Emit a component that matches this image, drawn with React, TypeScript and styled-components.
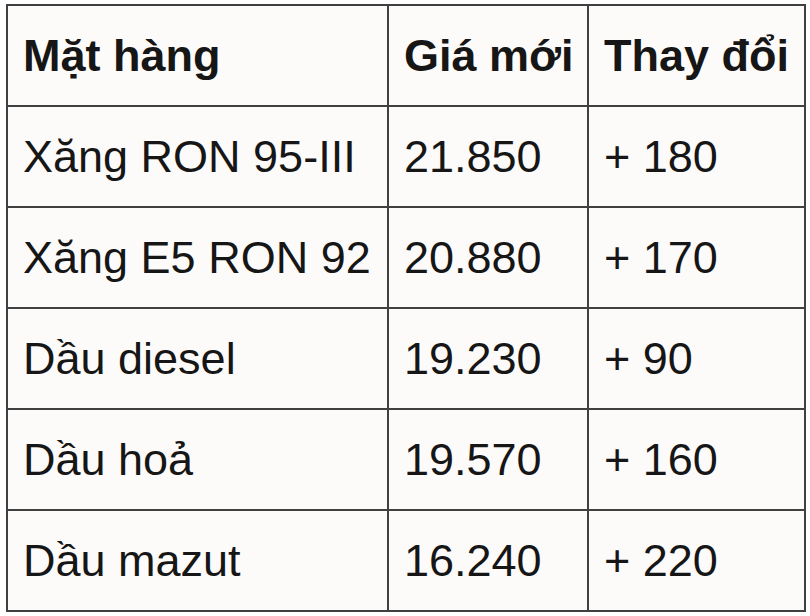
import React from 'react';
import styled, { createGlobalStyle } from 'styled-components';

const GlobalStyle = createGlobalStyle`
  html, body {
    margin: 0;
    padding: 0;
    background: #ffffff;
  }
`;

const Page = styled.div`
  padding: 4px 0 0 6px;
`;

const PriceTable = styled.table`
  border-collapse: collapse;
  table-layout: fixed;
  width: 798px;
  background: #fdfbfa;
  font-family: "Liberation Sans", Arial, sans-serif;
  color: #161616;
`;

const Row = styled.tr`
  height: 101px;
`;

const HeadCell = styled.th`
  border: 2px solid #404040;
  padding: 0 0 0 15px;
  text-align: left;
  font-size: 45px;
  font-weight: 700;
  white-space: nowrap;
  vertical-align: middle;
`;

const Cell = styled.td`
  border: 2px solid #404040;
  padding: 0 0 0 15px;
  font-size: 45px;
  font-weight: 400;
  white-space: nowrap;
  vertical-align: middle;
`;

const rows = [
  { name: 'Xăng RON 95-III', price: '21.850', change: '+ 180' },
  { name: 'Xăng E5 RON 92', price: '20.880', change: '+ 170' },
  { name: 'Dầu diesel', price: '19.230', change: '+ 90' },
  { name: 'Dầu hoả', price: '19.570', change: '+ 160' },
  { name: 'Dầu mazut', price: '16.240', change: '+ 220' },
];

const App: React.FC = () => {
  return (
    <Page>
      <GlobalStyle />
      <PriceTable>
        <colgroup>
          <col style={{ width: 381 }} />
          <col style={{ width: 200 }} />
          <col style={{ width: 217 }} />
        </colgroup>
        <thead>
          <Row>
            <HeadCell>Mặt hàng</HeadCell>
            <HeadCell>Giá mới</HeadCell>
            <HeadCell>Thay đổi</HeadCell>
          </Row>
        </thead>
        <tbody>
          {rows.map((r) => (
            <Row key={r.name}>
              <Cell>{r.name}</Cell>
              <Cell>{r.price}</Cell>
              <Cell>{r.change}</Cell>
            </Row>
          ))}
        </tbody>
      </PriceTable>
    </Page>
  );
};

export default App;
